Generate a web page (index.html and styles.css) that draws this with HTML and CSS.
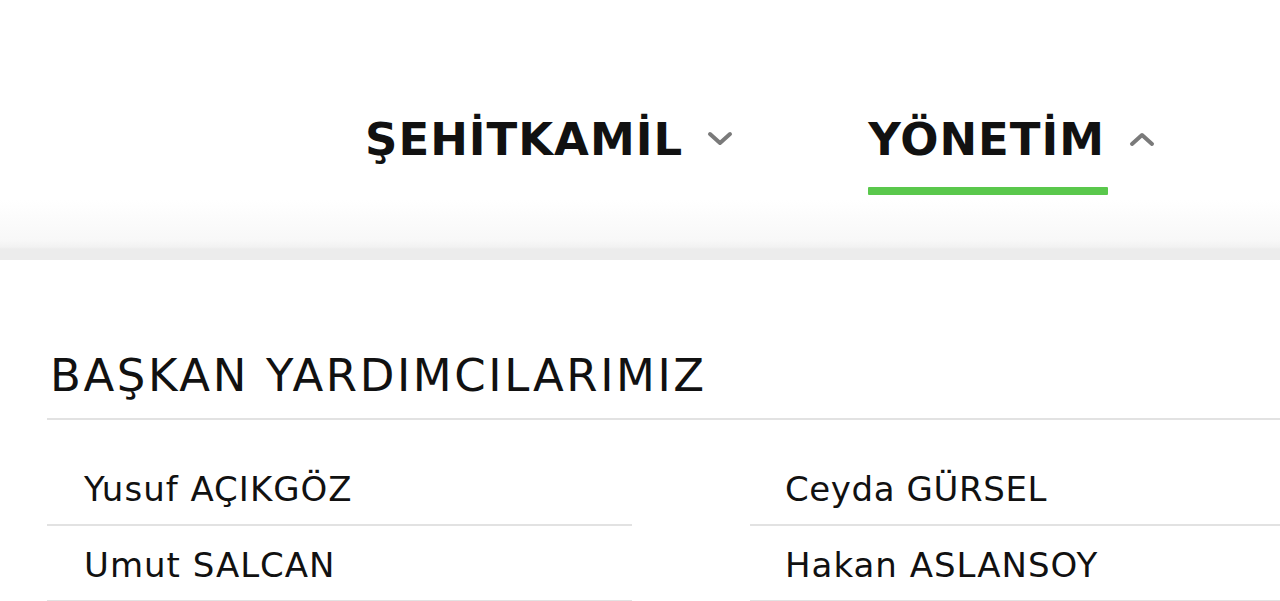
FILE: index.html
```html
<!DOCTYPE html>
<html lang="tr">
<head>
<meta charset="utf-8">
<title>Yönetim</title>
<link rel="stylesheet" href="styles.css">
</head>
<body>
<header class="top">
  <nav class="nav">
    <div class="nav-item">
      <span class="nav-label">ŞEHİTKAMİL</span>
      <svg class="chev" width="26" height="16" viewBox="0 0 26 16"><path d="M3 3 L13 12 L23 3" fill="none" stroke="#7a7a7a" stroke-width="4" stroke-linecap="round" stroke-linejoin="round"/></svg>
    </div>
    <div class="nav-item active">
      <span class="nav-label">YÖNETİM</span>
      <svg class="chev" width="26" height="16" viewBox="0 0 26 16"><path d="M3 13 L13 4 L23 13" fill="none" stroke="#7a7a7a" stroke-width="4" stroke-linecap="round" stroke-linejoin="round"/></svg>
    </div>
  </nav>
</header>
<main class="content">
  <h2 class="section-title">BAŞKAN YARDIMCILARIMIZ</h2>
  <div class="grid">
    <div class="col">
      <div class="row">Yusuf AÇIKGÖZ</div>
      <div class="row">Umut SALCAN</div>
    </div>
    <div class="col col-right">
      <div class="row">Ceyda GÜRSEL</div>
      <div class="row">Hakan ASLANSOY</div>
    </div>
  </div>
</main>
</body>
</html>
```
FILE: styles.css
```css
html, body {
  margin: 0;
  padding: 0;
  background: #fff;
  overflow: hidden;
}
body {
  font-family: "DejaVu Sans", sans-serif;
  color: #111;
  width: 1280px;
  height: 601px;
}
.top {
  height: 260px;
  box-sizing: border-box;
  background: linear-gradient(to bottom, #fff 0px, #fff 200px, #f8f8f8 240px, #f2f2f2 247px, #ececec 249px, #ececec 260px);
}
.nav {
  display: flex;
  padding-left: 365px;
  padding-top: 112px;
  gap: 135px;
}
.nav-item {
  display: flex;
  align-items: center;
  gap: 24px;
  height: 56px;
}
.nav-label {
  font-weight: 700;
  font-size: 45px;
  line-height: 56px;
  letter-spacing: 1px;
  color: #111;
  position: relative;
}
.nav-item.active .nav-label::after {
  content: "";
  position: absolute;
  left: 0;
  right: -3px;
  top: 75px;
  height: 8px;
  background: #5ac84c;
  border-radius: 1px;
}
.chev {
  display: block;
  margin-top: -2px;
}
.content {
  padding: 88px 0 0 47px;
}
.section-title {
  margin: 0;
  padding-left: 3px;
  font-weight: 400;
  font-size: 45px;
  line-height: 56px;
  letter-spacing: 2.6px;
  height: 70px;
  border-bottom: 2px solid #e2e2e2;
}
.grid {
  display: flex;
  gap: 118px;
  margin-top: 30px;
}
.col {
  width: 585px;
  flex: none;
}
.col-right {
  flex: 1;
  width: auto;
  min-width: 0;
}
.row {
  font-size: 34px;
  line-height: 40px;
  letter-spacing: 1px;
  padding: 19px 0 0 37px;
  height: 76px;
  box-sizing: border-box;
  border-bottom: 2px solid #e2e2e2;
  white-space: nowrap;
}
.col-right .row {
  padding-left: 35px;
}
.col-right .row:first-child {
  letter-spacing: 0.6px;
}
```
